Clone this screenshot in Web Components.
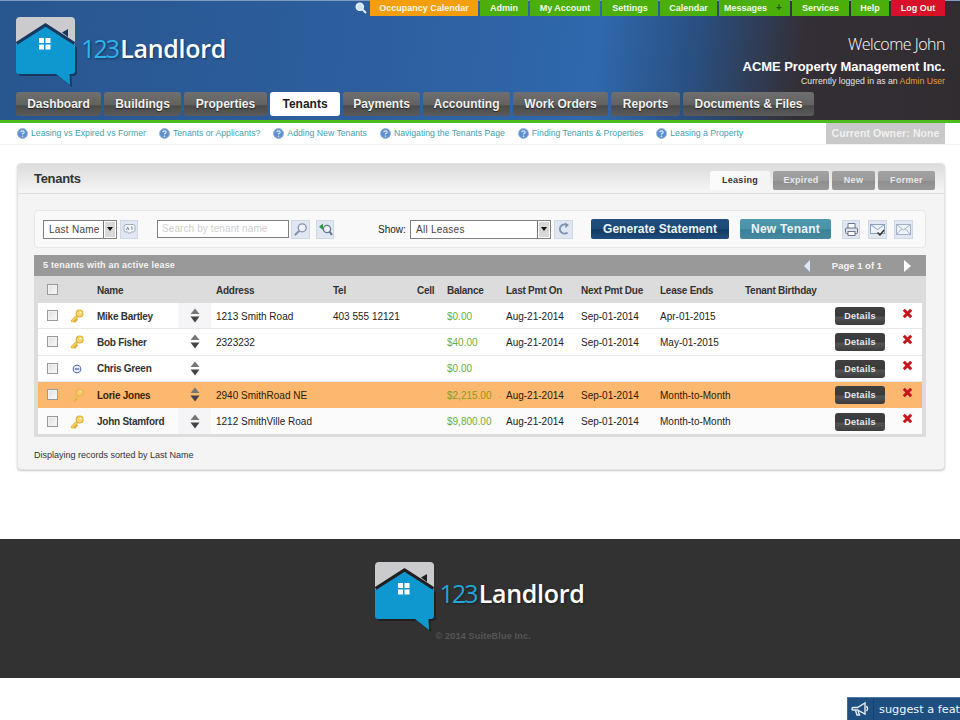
<!DOCTYPE html>
<html>
<head>
<meta charset="utf-8">
<title>123Landlord</title>
<style>
  html, body { margin: 0; background: #fff; }
  body { font-family: "Liberation Sans", Arial, sans-serif; font-size: 10px; color: #222; overflow-x: hidden; }
</style>
</head>
<body>

<rl-header>
  <top-link slot="top" color="#f59e0b" style="width:108px">Occupancy Calendar</top-link>
  <top-link slot="top" style="width:48px">Admin</top-link>
  <top-link slot="top" style="width:70px">My Account</top-link>
  <top-link slot="top" style="width:56px">Settings</top-link>
  <top-link slot="top" style="width:57px">Calendar</top-link>
  <top-link slot="top" plus style="width:71px">Messages</top-link>
  <top-link slot="top" style="width:57px">Services</top-link>
  <top-link slot="top" style="width:38px">Help</top-link>
  <top-link slot="top" color="#d8102a" style="width:54px">Log Out</top-link>
  <nav-tab slot="nav" style="width:85px">Dashboard</nav-tab>
  <nav-tab slot="nav" style="width:77px">Buildings</nav-tab>
  <nav-tab slot="nav" style="width:83px">Properties</nav-tab>
  <nav-tab slot="nav" active style="width:70px">Tenants</nav-tab>
  <nav-tab slot="nav" style="width:77px">Payments</nav-tab>
  <nav-tab slot="nav" style="width:87px">Accounting</nav-tab>
  <nav-tab slot="nav" style="width:95px">Work Orders</nav-tab>
  <nav-tab slot="nav" style="width:69px">Reports</nav-tab>
  <nav-tab slot="nav" style="width:131px">Documents &amp; Files</nav-tab>
</rl-header>

<help-bar>
  <help-link>Leasing vs Expired vs Former</help-link>
  <help-link>Tenants or Applicants?</help-link>
  <help-link>Adding New Tenants</help-link>
  <help-link>Navigating the Tenants Page</help-link>
  <help-link>Finding Tenants &amp; Properties</help-link>
  <help-link>Leasing a Property</help-link>
</help-bar>

<rl-panel heading="Tenants">
  <panel-tab slot="tabs" active style="width:60px">Leasing</panel-tab>
  <panel-tab slot="tabs" style="width:56px">Expired</panel-tab>
  <panel-tab slot="tabs" style="width:43px">New</panel-tab>
  <panel-tab slot="tabs" style="width:57px">Former</panel-tab>

  <tenant-toolbar></tenant-toolbar>
  <tenant-table>
    <tenant-row name="Mike Bartley" icon="key" shade address="1213 Smith Road" tel="403 555 12121" balance="$0.00" last="Aug-21-2014" next="Sep-01-2014" ends="Apr-01-2015"></tenant-row>
    <tenant-row name="Bob Fisher" icon="key" address="2323232" balance="$40.00" last="Aug-21-2014" next="Sep-01-2014" ends="May-01-2015"></tenant-row>
    <tenant-row name="Chris Green" icon="minus" balance="$0.00"></tenant-row>
    <tenant-row name="Lorie Jones" icon="key" hilite address="2940 SmithRoad NE" balance="$2,215.00" last="Aug-21-2014" next="Sep-01-2014" ends="Month-to-Month"></tenant-row>
    <tenant-row name="John Stamford" icon="key" shade address="1212 SmithVille Road" balance="$9,800.00" last="Aug-21-2014" next="Sep-01-2014" ends="Month-to-Month"></tenant-row>
  </tenant-table>
  <span slot="note">Displaying records sorted by Last Name</span>
</rl-panel>

<rl-footer></rl-footer>
<suggest-tab>suggest a feature</suggest-tab>

<script>
// small icon set used by the toolbar, the rows and the pager
const ICONS = {
  key: '<svg width="14" height="14" viewBox="0 0 14 14"><path d="M7.6 6.6 2.2 12M3.4 10.800l1.500 1.500M5 9.200l1.400 1.400" fill="none" stroke="#dfb03a" stroke-width="2.800" stroke-linecap="round"/><path d="M7.6 6.600 2.200 12" fill="none" stroke="#f6d76e" stroke-width="1.200" stroke-linecap="round"/><circle cx="9.600" cy="4.400" r="3.400" fill="#f6d76e" stroke="#e0b03a" stroke-width="1.200"/><circle cx="10.400" cy="3.600" r=".9" fill="#fff3c4"/></svg>',
  minus: '<svg width="10" height="10" viewBox="0 0 10 10"><circle cx="5" cy="5" r="3.800" fill="#e9edf8" stroke="#5a6fb4" stroke-width="1.100"/><path d="M2.800 5h4.400" stroke="#44589f" stroke-width="1.200"/></svg>',
  sort: '<svg width="10" height="15" viewBox="0 0 10 15"><path d="M5 .5 9.500 6H.5z" fill="#777"/><path d="M.5 8.500h9L5 14.500z" fill="#444"/></svg>',
  del: '<svg width="11" height="11" viewBox="0 0 11 11"><path d="M1.800 1.800 9.200 9.200M9.200 1.800 1.800 9.200" stroke="#c4141c" stroke-width="3"/></svg>',
  az: '<svg width="13" height="12" viewBox="0 0 13 12"><path d="M3 1.500h7q2 0 2 2v3.500q0 2-2 2H8L6.500 11 5 9H3q-2 0-2-2V3.500q0-2 2-2z" fill="#f3f6fb" stroke="#a3aebd"/><path d="M3.500 7 4.700 4 5.900 7M8 4h1v3" fill="none" stroke="#7d8898"/></svg>',
  find: '<svg width="15" height="15" viewBox="0 0 15 15"><circle cx="9.200" cy="5.800" r="4" fill="#eef2f8" stroke="#8493a8" stroke-width="1.300"/><path d="M6.300 8.700 1.800 13.200" stroke="#8493a8" stroke-width="2"/></svg>',
  back: '<svg width="15" height="15" viewBox="0 0 15 15"><circle cx="9" cy="7" r="3.600" fill="#eef2f8" stroke="#65788f" stroke-width="1.300"/><path d="M11.500 9.700 14 13" stroke="#65788f" stroke-width="2"/><path d="M1 4.800 5 1.500v6.600z" fill="#2e9a3f"/></svg>',
  reload: '<svg width="14" height="14" viewBox="0 0 14 14"><path d="M10.500 3.500A4.600 4.600 0 1 0 10.500 10.500" fill="none" stroke="#7c93b0" stroke-width="2"/><path d="M8 .5 12 3 8.500 6z" fill="#7c93b0"/></svg>',
  print: '<svg width="15" height="15" viewBox="0 0 15 15"><path d="M4 6V1.500h7V6" fill="#fff" stroke="#6a7585"/><rect x="1.500" y="6" width="12" height="5.500" rx="1" fill="#dfe3ea" stroke="#6a7585"/><rect x="4" y="9.500" width="7" height="4" fill="#fff" stroke="#6a7585"/></svg>',
  mailcheck: '<svg width="15" height="13" viewBox="0 0 15 13"><rect x=".5" y="1.500" width="14" height="9" fill="#eef3f9" stroke="#8ba0ba"/><path d="M.5 1.500 7.500 6.500 14.500 1.500" fill="none" stroke="#8ba0ba"/><path d="M7.500 9.500 10 12 14 7" fill="none" stroke="#333" stroke-width="1.500"/></svg>',
  mail: '<svg width="15" height="11" viewBox="0 0 15 11"><rect x=".5" y=".5" width="14" height="10" fill="#eef3f9" stroke="#9fb2c9"/><path d="M.5 .5 7.500 6 14.500 .5M.5 10.500 5.500 5M14.500 10.500 9.500 5" fill="none" stroke="#9fb2c9"/></svg>',
  help: '<svg width="11" height="11" viewBox="0 0 11 11"><circle cx="5.500" cy="5.500" r="5" fill="#5b8fd0" stroke="#9fb8d8"/><path d="M3.800 4.300Q3.800 2.900 5.500 2.900T7.200 4.300Q7.200 5.200 5.500 5.800V6.600" fill="none" stroke="#e8eef7" stroke-width="1.100"/><circle cx="5.500" cy="8.300" r=".8" fill="#e8eef7"/></svg>',
  search: '<svg width="12" height="12" viewBox="0 0 12 12"><circle cx="4.800" cy="4.800" r="3.600" fill="#cfe3f5" stroke="#eef5fb" stroke-width="1.300"/><path d="M7.500 7.500 11 11" stroke="#e8e8e8" stroke-width="2"/></svg>',
  horn: '<svg width="20" height="18" viewBox="0 0 20 18"><path d="M2 7.500h4.500L14 3v11L6.500 10H2q-1 0-1-1.200 0-1.300 1-1.300z" fill="none" stroke="#e6edf5" stroke-width="1.400"/><path d="M4.500 10.500 6 15h2.500L7 10.700M15.500 6q2 2.500 0 5" fill="none" stroke="#e6edf5" stroke-width="1.400"/></svg>'
};

function shadow(el, html) {
  el.attachShadow({ mode: 'open' }).innerHTML = html;
}

class RlLogo extends HTMLElement {
  connectedCallback() {
    // the roof and the drop shadow are navy on the header, near black in the footer
    const dark = this.getAttribute('dark') || '#17385f';
    const digits = this.getAttribute('digits') || '#2fb2ec';
    shadow(this, `
      <style>
        :host { display: flex; align-items: flex-start; }
        .word { margin: 14px 0 0 3px; font: 600 25px/34px "Open Sans", sans-serif; color: #fff; letter-spacing: -.3px; white-space: nowrap; text-shadow: 1px 1px 2px ${dark}; }
        .word b { font-weight: 400; color: ${digits}; letter-spacing: -1.9px; margin-right: 2px; }
      </style>
      <svg width="62" height="70" viewBox="0 0 62 70">
        <path d="M2 30 31.500 11 61 30V55Q61 59 57 59H55.500L56 70 42 59H6Q2 59 2 55Z" fill="${dark}"/>
        <rect width="59" height="42" rx="4" fill="#cbcbcd"/>
        <path d="M0 27.500 29.500 8.500 59 27.500V54Q59 57 56 57H53.500L54 68 40 57H3Q0 57 0 54Z" fill="#0f98d0"/>
        <path d="M.5 26.500 29.500 8 58.500 26.500" fill="none" stroke="${dark}" stroke-width="3.200"/>
        <path d="M46 15.500 52 12V20Z" fill="${dark}"/>
        <path d="M23 21h5v5h-5zM29.500 21h5v5h-5zM23 27.500h5v5h-5zM29.500 27.500h5v5h-5z" fill="#fff"/>
      </svg>
      <div class="word"><b>123</b>Landlord</div>`);
  }
}
customElements.define('rl-logo', RlLogo);

class RlHeader extends HTMLElement {
  constructor() {
    super();
    shadow(this, `
      <style>
        :host { display: block; height: 120px; border-bottom: 3px solid #4cbc1c; box-sizing: content-box;
          background: linear-gradient(97deg, #28568f 0, #2d5f9f 40%, #2f68ad 62%, #2a4f80 72%, #342f36 83%, #302c30 100%); box-shadow: inset 0 1px 0 #7e9cc2; }
        .top { display: flex; justify-content: flex-end; align-items: flex-start; gap: 2px; height: 16px; padding-right: 15px; }
        .glass { margin: 2px 1px 0 0; line-height: 0; }
        .mid { display: flex; justify-content: space-between; height: 76px; padding: 0 15px 0 16px; }
        rl-logo { margin-top: 1px; }
        .who { text-align: right; color: #fff; padding-top: 18px; }
        .hi { font: 300 16px/20px "Open Sans", sans-serif; letter-spacing: -.5px; }
        .co { font: bold 13px/15px "Liberation Sans", sans-serif; letter-spacing: -.07px; margin-top: 5px; }
        .as { font: 8.7px/12px "Liberation Sans", sans-serif; color: #e4e4e4; margin-top: 1px; }
        .as span { color: #e0a32e; }
        .nav { display: flex; gap: 3px; padding-left: 16px; }
      </style>
      <div class="top"><span class="glass">${ICONS.search}</span><slot name="top"></slot></div>
      <div class="mid">
        <rl-logo></rl-logo>
        <div class="who">
          <div class="hi">Welcome John</div>
          <div class="co">ACME Property Management Inc.</div>
          <div class="as">Currently logged in as an <span>Admin User</span></div>
        </div>
      </div>
      <div class="nav"><slot name="nav"></slot></div>`);
  }
}
customElements.define('rl-header', RlHeader);

class TopLink extends HTMLElement {
  connectedCallback() {
    const color = this.getAttribute('color') || '#4cae0a';
    const plus = this.hasAttribute('plus');
    shadow(this, `
      <style>
        :host { display: flex; align-items: center; justify-content: ${plus ? 'flex-start' : 'center'}; height: 16px;
          padding-left: ${plus ? '5px' : '0'}; box-sizing: border-box; background: ${color}; color: #f3f7ea;
          font: bold 9px/16px "Liberation Sans", sans-serif; white-space: nowrap; }
        i { font-style: normal; color: #1c5a10; margin-left: 9px; font-size: 10px; }
      </style>
      <slot></slot>${plus ? '<i>+</i>' : ''}`);
  }
}
customElements.define('top-link', TopLink);

class NavTab extends HTMLElement {
  constructor() {
    super();
    shadow(this, `
      <style>
        :host { display: flex; align-items: center; justify-content: center; height: 24px; border-radius: 3px;
          background: linear-gradient(#6f6f6f 0, #626262 52%, #4b4b4b 58%, #5b5b5b 100%); color: #f2f2f2;
          font: bold 12px/24px "Liberation Sans", sans-serif; white-space: nowrap; text-shadow: 0 1px 1px #222; }
        :host([active]) { background: #fff; color: #1c1c1c; text-shadow: none; }
      </style>
      <slot></slot>`);
  }
}
customElements.define('nav-tab', NavTab);

class HelpBar extends HTMLElement {
  constructor() {
    super();
    shadow(this, `
      <style>
        :host { display: flex; align-items: center; gap: 13px; height: 21px; padding: 0 15px 0 17px; border-bottom: 1px solid #f1f1f1; }
        .owner { margin-left: auto; width: 119px; height: 21px; background: #c9c9c9; color: #f0f0f0; text-align: center;
          font: bold 10.5px/21px "Liberation Sans", sans-serif; letter-spacing: .1px; }
      </style>
      <slot></slot>
      <div class="owner">Current Owner: None</div>`);
  }
}
customElements.define('help-bar', HelpBar);

class HelpLink extends HTMLElement {
  constructor() {
    super();
    shadow(this, `
      <style>
        :host { display: flex; align-items: center; gap: 3px; color: #3f9fb0; font: 8.7px/11px "Liberation Sans", sans-serif; white-space: nowrap; }
        svg { display: block; }
      </style>
      ${ICONS.help}<slot></slot>`);
  }
}
customElements.define('help-link', HelpLink);

class RlPanel extends HTMLElement {
  connectedCallback() {
    shadow(this, `
      <style>
        :host { display: block; width: 928px; box-sizing: border-box; margin: 18px 0 0 17px; background: #f4f4f4;
          border: 1px solid #e2e2e2; border-radius: 4px; box-shadow: 0 1px 2px #c8c8c8; }
        .head { display: flex; justify-content: space-between; height: 29px; padding: 0 9px 0 16px; background: linear-gradient(#dcdcdc, #f6f6f6);
          border-bottom: 1px solid #dcdcdc; border-radius: 3px 3px 0 0; }
        h1 { margin: 0; font: bold 13px/30px "Liberation Sans", sans-serif; color: #333; letter-spacing: -.3px; }
        .tabs { display: flex; gap: 3px; padding-top: 7px; }
        .body { padding: 16px 18px 0 16px; }
        .note { height: 32px; font: 9px/36px "Liberation Sans", sans-serif; color: #333; }
      </style>
      <div class="head"><h1>${this.getAttribute('heading')}</h1><div class="tabs"><slot name="tabs"></slot></div></div>
      <div class="body"><slot></slot><div class="note"><slot name="note"></slot></div></div>`);
  }
}
customElements.define('rl-panel', RlPanel);

class PanelTab extends HTMLElement {
  constructor() {
    super();
    shadow(this, `
      <style>
        :host { display: flex; align-items: center; justify-content: center; height: 19px; border-radius: 2px;
          background: linear-gradient(#a2a2a2 0, #9a9a9a 50%, #8e8e8e 56%, #999 100%); color: #e8e8e8;
          font: bold 9px/19px "Liberation Sans", sans-serif; letter-spacing: .3px; }
        :host([active]) { background: linear-gradient(90deg, #fbfbfb, #f4f4f4); color: #333; }
      </style>
      <slot></slot>`);
  }
}
customElements.define('panel-tab', PanelTab);

class IconBtn extends HTMLElement {
  connectedCallback() {
    shadow(this, `
      <style>
        :host { display: flex; align-items: center; justify-content: center; width: 19px; height: 19px; box-sizing: border-box;
          background: #e0e7f3; border: 1px solid #cfd8e6; flex: none; }
      </style>
      ${ICONS[this.getAttribute('icon')]}`);
  }
}
customElements.define('icon-btn', IconBtn);

class DropSelect extends HTMLElement {
  constructor() {
    super();
    shadow(this, `
      <style>
        :host { display: flex; align-items: center; justify-content: space-between; height: 19px; box-sizing: border-box; flex: none;
          padding-left: 5px; background: #fff; border: 1px solid #808080; color: #444; font: 10px/17px "Liberation Sans", sans-serif; letter-spacing: .25px; }
        .drop { width: 13px; height: 17px; box-sizing: border-box; background: #d8d8d8; border: 1px solid #777; border-width: 0 0 0 1px; display: flex; align-items: center; justify-content: center; box-shadow: inset 0 0 0 1px #fff; }
        .drop::after { content: ""; border: 3px solid transparent; border-top: 4px solid #111; border-bottom: 0; }
      </style>
      <slot></slot><span class="drop"></span>`);
  }
}
customElements.define('drop-select', DropSelect);

class ActionBtn extends HTMLElement {
  connectedCallback() {
    const tone = this.getAttribute('tone');
    const bg = tone === 'teal'
      ? 'linear-gradient(#4e98ad 0, #4a93a9 48%, #39819a 54%, #46899f 100%)'
      : 'linear-gradient(#1f4e7e 0, #1c4a78 48%, #123a62 54%, #1f4d7c 100%)';
    shadow(this, `
      <style>
        :host { display: flex; align-items: center; justify-content: center; height: 20px; border-radius: 2px; flex: none; background: ${bg};
          color: #edf3f7; font: bold 12px/20px "Liberation Sans", sans-serif; letter-spacing: .25px; white-space: nowrap; }
      </style>
      <slot></slot>`);
  }
}
customElements.define('action-btn', ActionBtn);

class TenantToolbar extends HTMLElement {
  constructor() {
    super();
    shadow(this, `
      <style>
        :host { display: flex; align-items: center; height: 38px; box-sizing: border-box; padding-left: 8px; background: #f9f9f9;
          border: 1px solid #e6e6e6; border-radius: 4px; font: 10px "Liberation Sans", sans-serif; }
        .search { width: 132px; height: 18px; box-sizing: border-box; margin-left: 19px; padding-left: 4px; background: #fff; border: 1px solid #808080; color: #cfcfcf; line-height: 16px; letter-spacing: .1px; white-space: nowrap; overflow: hidden; }
        .show { margin: 0 5px 0 44px; width: 27px; color: #222; }
      </style>
      <drop-select style="width:74px">Last Name</drop-select>
      <icon-btn icon="az" style="margin-left:3px;width:18px"></icon-btn>
      <div class="search">Search by tenant name</div>
      <icon-btn icon="find" style="margin-left:2px"></icon-btn>
      <icon-btn icon="back" style="margin-left:6px;width:18px"></icon-btn>
      <span class="show">Show:</span>
      <drop-select style="width:141px">All Leases</drop-select>
      <icon-btn icon="reload" style="margin-left:3px"></icon-btn>
      <action-btn style="width:138px;margin-left:18px;letter-spacing:.03px">Generate Statement</action-btn>
      <action-btn tone="teal" style="width:91px;margin-left:11px">New Tenant</action-btn>
      <icon-btn icon="print" style="margin-left:11px;width:18px"></icon-btn>
      <icon-btn icon="mailcheck" style="margin-left:8px"></icon-btn>
      <icon-btn icon="mail" style="margin-left:7px"></icon-btn>`);
  }
}
customElements.define('tenant-toolbar', TenantToolbar);

const CHECKBOX = 'display:block;width:11px;height:11px;box-sizing:border-box;border:1px solid #9a9a9a;background:linear-gradient(135deg,#dedede,#fafafa);box-shadow:inset 0 0 0 1px #f2f2f2';
const COLUMNS = '33px 26px 81px 33px 122px 84px 30px 59px 75px 79px 85px 90px 67px 20px';

class TenantTable extends HTMLElement {
  constructor() {
    super();
    shadow(this, `
      <style>
        :host { display: block; margin-top: 7px; background: #dcdcdc; font: 10px "Liberation Sans", sans-serif; padding-bottom: 3px; }
        .bar { display: flex; align-items: center; height: 21px; padding: 0 15px 0 9px; background: #999; color: #f4f4f4; font: bold 9px/21px "Liberation Sans", sans-serif; letter-spacing: .2px; }
        .pager { margin-left: auto; display: flex; align-items: center; gap: 22px; }
        .pager b { font-size: 9.5px; letter-spacing: 0; font-weight: bold; }
        .l { border: 6px solid transparent; border-right: 6px solid #dceaf8; border-left: 0; }
        .r { border: 6px solid transparent; border-left: 7px solid #fff; border-right: 0; }
        .cols { display: grid; grid-template-columns: ${COLUMNS}; align-items: center; height: 27px; box-sizing: border-box; padding: 1px 0 0 4px; color: #333; font: bold 10px "Liberation Sans", sans-serif; letter-spacing: -.25px; }
        .cols i { ${CHECKBOX}; margin: -2px 0 0 9px; }
        .rows { margin: 0 4px; }
      </style>
      <div class="bar">5 tenants with an active lease
        <div class="pager"><span class="l"></span><b>Page 1 of 1</b><span class="r"></span></div>
      </div>
      <div class="cols">
        <i></i><span></span><span>Name</span><span></span><span style="padding-left:5px">Address</span><span>Tel</span><span>Cell</span><span>Balance</span><span>Last Pmt On</span><span>Next Pmt Due</span><span>Lease Ends</span><span>Tenant Birthday</span>
      </div>
      <div class="rows"><slot></slot></div>`);
  }
}
customElements.define('tenant-table', TenantTable);

class TenantRow extends HTMLElement {
  connectedCallback() {
    const a = n => this.getAttribute(n) || '';
    shadow(this, `
      <style>
        :host { display: grid; grid-template-columns: ${COLUMNS}; align-items: center; height: 26.25px; box-sizing: border-box; padding-top: 1px;
          background: #fff; border-bottom: 1px solid #e8e8e8; color: #222; font: 10px "Liberation Sans", sans-serif; white-space: nowrap; }
        :host(:last-child) { border-bottom: 0; background: #fbfbfb; }
        :host([hilite]) { background: #fdb86f; border-bottom: 0; color: #2c1a08; }
        .chk { ${CHECKBOX}; margin: -1px 0 0 9px; }
        .ic { display: flex; align-items: center; justify-content: center; width: 14px; margin-left: -1px; line-height: 0; }
        :host([hilite]) .ic svg { opacity: .6; }
        .nm { font: bold 10px "Liberation Sans", sans-serif; letter-spacing: -.25px; color: #333; }
        :host([hilite]) .nm { color: #3a2308; }
        .sort { align-self: stretch; display: flex; align-items: center; justify-content: center; margin-top: -1px; }
        :host([shade]) .sort { background: #f5f5f7; }
        .ad { padding-left: 5px; }
        .bal { color: #6cae3c; }
        :host([hilite]) .bal { color: #8c9a16; }
        .det { display: flex; align-items: center; justify-content: center; width: 50px; height: 18px; border-radius: 3px; color: #e8e8e8;
          background: linear-gradient(#3f3f3f 0, #3a3a3a 50%, #545454 56%, #3c3c3c 100%); font: bold 9px/18px "Liberation Sans", sans-serif; letter-spacing: .3px; }
        .del { line-height: 0; margin-top: -6px; }
      </style>
      <span class="chk"></span><span class="ic">${ICONS[a('icon')]}</span><span class="nm">${a('name')}</span>
      <span class="sort">${ICONS.sort}</span>
      <span class="ad">${a('address')}</span><span>${a('tel')}</span><span></span>
      <span class="bal">${a('balance')}</span><span>${a('last')}</span><span>${a('next')}</span><span>${a('ends')}</span><span></span>
      <span class="det">Details</span><span class="del">${ICONS.del}</span>`);
  }
}
customElements.define('tenant-row', TenantRow);

class RlFooter extends HTMLElement {
  constructor() {
    super();
    shadow(this, `
      <style>
        :host { display: flex; flex-direction: column; align-items: center; height: 139px; margin-top: 69px; background: #323232; box-sizing: border-box; padding-top: 23px; }
        .wrap { margin-left: -1px; }
        .copy { margin: -2px 0 0 61px; font: bold 9px/12px "Liberation Sans", sans-serif; color: #565656; letter-spacing: .2px; }
      </style>
      <div class="wrap">
        <rl-logo dark="#202020" digits="#1fa6dc"></rl-logo>
        <div class="copy">&copy; 2014 SuiteBlue Inc.</div>
      </div>`);
  }
}
customElements.define('rl-footer', RlFooter);

class SuggestTab extends HTMLElement {
  constructor() {
    super();
    shadow(this, `
      <style>
        :host { position: fixed; right: 0; bottom: 0; display: flex; align-items: center; width: 113px; height: 23px; overflow: hidden;
          background: #1e4f80; border-top: 1px solid #4d7aa5; border-left: 1px solid #3e6d99; box-sizing: border-box; padding-top: 1px; color: #f2f6fa;
          font: 11.3px/21px "DejaVu Sans", sans-serif; white-space: nowrap; }
        .horn { flex: none; width: 25px; height: 21px; margin-top: -1px; display: flex; align-items: center; justify-content: center; border-right: 1px solid #16406a; margin-right: 5px; }
      </style>
      <span class="horn">${ICONS.horn}</span><slot></slot>`);
  }
}
customElements.define('suggest-tab', SuggestTab);
</script>
</body>
</html>
